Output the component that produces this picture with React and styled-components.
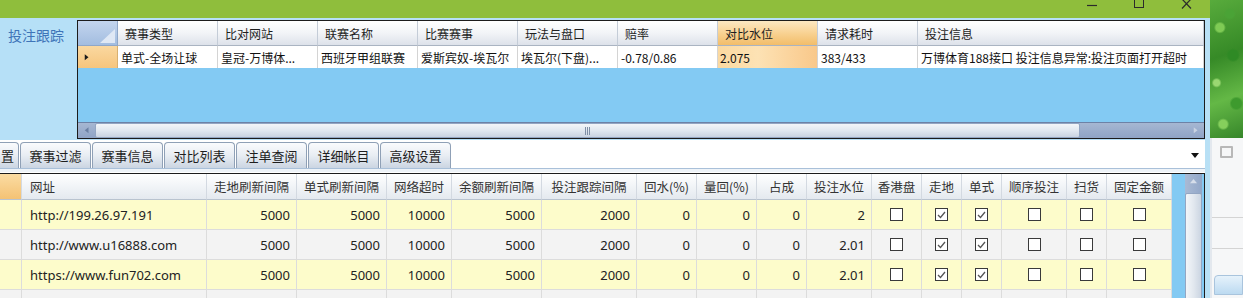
import React from "react";
import styled, { createGlobalStyle } from "styled-components";

const GlobalStyle = createGlobalStyle`
  html, body { margin: 0; padding: 0; background: #ffffff; }
  body { font-family: "Noto Sans", "Noto Sans CJK SC", sans-serif; }
  * { box-sizing: border-box; }
`;

const CJK = `"Noto Sans CJK SC", "Noto Sans", sans-serif`;
const UI = `"Noto Sans", "Noto Sans CJK SC", sans-serif`;

const Root = styled.div`
  width: 1243px;
  height: 298px;
  overflow: hidden;
  display: grid;
  grid-template-columns: 1210px 33px;
`;

const Window = styled.div`
  display: flex;
  flex-direction: column;
  min-width: 0;
  overflow: hidden;
  background: #ffffff;
`;

const TitleBar = styled.div`
  height: 18px;
  flex: none;
  background: #8fbe3c;
  display: flex;
  justify-content: flex-end;
  align-items: flex-start;
`;

const CtrlButton = styled.div`
  width: 47px;
  height: 12px;
  display: flex;
  justify-content: center;
  align-items: flex-start;
  color: #2b2b2b;
`;

const Body = styled.div`
  flex: 1;
  display: flex;
  flex-direction: column;
  border-right: 5px solid #b8e0f5;
  min-height: 0;
`;

const Upper = styled.div`
  height: 122px;
  flex: none;
  background: #b6e0f7;
  display: flex;
  padding: 2px 0 1px 0;
`;

const SideLabel = styled.div`
  width: 77px;
  flex: none;
  padding: 5px 0 0 8px;
  color: #3e74b8;
  font-family: ${CJK};
  font-size: 14px;
  line-height: 20px;
`;

const TopGrid = styled.div`
  flex: 1;
  min-width: 0;
  border: 1px solid #1c1c1c;
  background: #83caf3;
  display: flex;
  flex-direction: column;
  overflow: hidden;
`;

const TopRow = styled.div`
  display: grid;
  grid-template-columns: 40px repeat(8, 100px) 1fr;
  height: ${(p) => p.$h}px;
  flex: none;
`;

const TopHead = styled.div`
  font-family: ${CJK};
  font-size: 12px;
  color: #1e1e1e;
  display: flex;
  align-items: center;
  padding-left: 7px;
  white-space: nowrap;
  overflow: hidden;
  border-right: 1px solid #c4ccd7;
  border-bottom: 1px solid #aab4c2;
  background: ${(p) =>
    p.$accent
      ? "linear-gradient(#fce8c2 0%, #f8d08e 55%, #f2bd6a 100%)"
      : "linear-gradient(#ffffff 0%, #f2f4f7 50%, #dde2ea 100%)"};
`;

const CornerCell = styled.div`
  border-right: 1px solid #8fa7c8;
  border-bottom: 1px solid #8fa7c8;
  background: linear-gradient(#c3d5ee, #a3bde0);
  overflow: hidden;
`;

const TopCell = styled.div`
  font-family: ${CJK};
  font-size: 12px;
  color: #111;
  display: flex;
  align-items: center;
  padding-left: ${(p) => (p.$accent ? 2 : 3)}px;
  white-space: nowrap;
  overflow: hidden;
  border-right: 1px solid #d4d4d4;
  background: ${(p) =>
    p.$accent
      ? "linear-gradient(90deg, #fbd9a0 0%, #fde2b4 40%, #f9c88a 100%)"
      : "#ffffff"};
`;

const RowHeadCell = styled.div`
  display: flex;
  align-items: center;
  padding-left: 6px;
  border-right: 1px solid #d8b070;
  background: linear-gradient(#fad8a0, #f6c57d);
`;

const Fill = styled.div`
  flex: 1;
`;

const HScroll = styled.div`
  height: 16px;
  flex: none;
  display: flex;
  background: linear-gradient(#a6b7d2, #8fa4c6);
  border-top: 1px solid #6d82a6;
`;

const ScrollBtn = styled.div`
  width: ${(p) => p.$w || 17}px;
  height: ${(p) => p.$h || 16}px;
  flex: none;
  display: flex;
  align-items: center;
  justify-content: center;
`;

const HThumb = styled.div`
  width: 985px;
  flex: none;
  background: linear-gradient(#f3f6f9 0%, #e1e8f0 50%, #c9d3e1 100%);
  border: 1px solid #93a6c3;
  border-radius: 2px;
  display: flex;
  align-items: center;
  justify-content: center;
`;

const TabStrip = styled.div`
  height: 33px;
  flex: none;
  display: flex;
  flex-direction: column;
  background: #ffffff;
`;

const TabLine = styled.div`
  height: 29px;
  display: flex;
  align-items: flex-end;
  border-bottom: 1px solid #a9c0d9;
  overflow: hidden;
`;

const TabList = styled.div`
  display: flex;
  gap: 1px;
  align-items: flex-end;
`;

const Tab = styled.div`
  width: ${(p) => (p.$partial ? 19 : 71)}px;
  height: 26px;
  flex: none;
  border: 1px solid #8fa0b6;
  border-bottom: none;
  border-left-width: ${(p) => (p.$partial ? 0 : 1)}px;
  border-radius: ${(p) => (p.$partial ? "0 4px 0 0" : "4px 4px 0 0")};
  background: linear-gradient(#fafbfd 0%, #e8edf3 50%, #cbd5e2 100%);
  font-family: ${CJK};
  font-size: 13px;
  color: #1e1e1e;
  display: flex;
  align-items: center;
  justify-content: ${(p) => (p.$partial ? "flex-end" : "center")};
  padding-right: ${(p) => (p.$partial ? 4 : 0)}px;
  white-space: nowrap;
  overflow: hidden;
`;

const TabMenu = styled.div`
  margin-left: auto;
  align-self: center;
  margin-right: 6px;
  margin-top: 2px;
`;

const TabGap = styled.div`
  height: 3px;
  background: #eef3f8;
`;

const BottomGrid = styled.div`
  flex: 1;
  display: flex;
  border-top: 1px solid #1c1c1c;
  border-right: 1px solid #1c1c1c;
  background: #83caf3;
  min-height: 0;
  overflow: hidden;
`;

const Table = styled.div`
  width: 1172px;
  flex: none;
  display: flex;
  flex-direction: column;
`;

const cols =
  "22px 185px 90px 90px 65px 90px 95px 60px 60px 50px 65px 50px 40px 40px 65px 40px 65px";

const GridRow = styled.div`
  display: grid;
  grid-template-columns: ${cols};
  height: ${(p) => p.$h}px;
  flex: none;
  background: ${(p) => p.$bg || "transparent"};
`;

const Head = styled.div`
  font-family: ${CJK};
  font-size: 12.5px;
  color: #333;
  display: flex;
  align-items: center;
  justify-content: ${(p) => (p.$left ? "flex-start" : "center")};
  padding-left: ${(p) => (p.$left ? 8 : 0)}px;
  white-space: nowrap;
  border-right: 1px solid #d3d9e1;
  border-bottom: 1px solid #b9c3cf;
  background: ${(p) =>
    p.$accent
      ? "linear-gradient(#fbdca3, #f4c274)"
      : "linear-gradient(#ffffff 0%, #f1f4f7 50%, #e4e9ef 100%)"};
`;

const Cell = styled.div`
  font-family: ${UI};
  font-size: 13px;
  color: #222;
  display: flex;
  align-items: center;
  justify-content: ${(p) =>
    p.$align === "left" ? "flex-start" : p.$align === "center" ? "center" : "flex-end"};
  padding: 0 ${(p) => (p.$align === "right" ? 6 : 0)}px 0
    ${(p) => (p.$align === "left" ? 8 : 0)}px;
  border-right: 1px solid #dcdcdc;
  border-bottom: 1px solid #dcdcdc;
  white-space: nowrap;
`;

const Box = styled.span`
  width: 13px;
  height: 13px;
  border: 1px solid #3a3a3a;
  background: #ffffff;
  display: flex;
  align-items: center;
  justify-content: center;
`;

const VScroll = styled.div`
  width: 17px;
  flex: none;
  margin-left: auto;
  margin-right: 2px;
  display: flex;
  flex-direction: column;
  background: linear-gradient(90deg, #a9bad4, #92a7c8);
`;

const VThumb = styled.div`
  margin-top: 3px;
  flex: 1;
  background: linear-gradient(90deg, #f3f6f9 0%, #e2e8ef 50%, #cbd5e2 100%);
  border: 1px solid #93a6c3;
  border-radius: 2px;
  display: flex;
  align-items: center;
  justify-content: center;
  padding-top: 120px;
  min-height: 160px;
`;

const Desktop = styled.div`
  display: flex;
  flex-direction: column;
  background: #f6f7f8;
`;

const Foliage = styled.div`
  height: 138px;
  flex: none;
  background:
    radial-gradient(circle at 30% 20%, #7fcb55 0 4px, transparent 6px),
    radial-gradient(circle at 70% 40%, #2f8a25 0 5px, transparent 7px),
    radial-gradient(circle at 20% 60%, #9ad872 0 3px, transparent 5px),
    radial-gradient(circle at 80% 75%, #3e9a2e 0 5px, transparent 7px),
    radial-gradient(circle at 40% 90%, #85cf5c 0 4px, transparent 6px),
    radial-gradient(circle at 60% 10%, #4aa336 0 4px, transparent 6px),
    linear-gradient(160deg, #58ab3c, #368a27 40%, #64b846 70%, #36862a);
`;

const DeskPanel = styled.div`
  flex: 1;
  display: flex;
  flex-direction: column;
  border-left: 2px solid #e3e8ee;
  padding: 8px 0 0 8px;
`;

const DeskIcon = styled.div`
  width: 13px;
  height: 12px;
  border: 2px solid #b8b8b8;
  border-radius: 1px;
`;

const DeskLine = styled.div`
  height: 1px;
  background: #d4d4d4;
  margin-top: ${(p) => p.$mt}px;
  margin-left: -8px;
`;

const DeskButton = styled.div`
  margin-top: 26px;
  margin-left: -6px;
  height: 20px;
  border: 1px solid #a9c4dd;
  border-radius: 4px 0 0 0;
  background: linear-gradient(#e6f2fb, #bcdaf1);
`;

const topHeaders = [
  "赛事类型",
  "比对网站",
  "联赛名称",
  "比赛赛事",
  "玩法与盘口",
  "赔率",
  "对比水位",
  "请求耗时",
  "投注信息",
];

const topData = [
  "单式-全场让球",
  "皇冠-万博体...",
  "西班牙甲组联赛",
  "爱斯宾奴-埃瓦尔",
  "埃瓦尔(下盘)...",
  "-0.78/0.86",
  "2.075",
  "383/433",
  "万博体育188接口 投注信息异常:投注页面打开超时",
];

const tabs = ["赛事过滤", "赛事信息", "对比列表", "注单查阅", "详细帐目", "高级设置"];

const bottomHeaders = [
  "网址",
  "走地刷新间隔",
  "单式刷新间隔",
  "网络超时",
  "余额刷新间隔",
  "投注跟踪间隔",
  "回水(%)",
  "量回(%)",
  "占成",
  "投注水位",
  "香港盘",
  "走地",
  "单式",
  "顺序投注",
  "扫货",
  "固定金额",
];

const rows = [
  { url: "http://199.26.97.191", w: "2" },
  { url: "http://www.u16888.com", w: "2.01" },
  { url: "https://www.fun702.com", w: "2.01" },
];

const Check = ({ on }) => (
  <Box>
    {on && (
      <svg width="9" height="8" viewBox="0 0 9 8">
        <path d="M1 4 L3.5 6.5 L8 1" fill="none" stroke="#555" strokeWidth="1.3" />
      </svg>
    )}
  </Box>
);

const Arrow = ({ dir, color = "#5f7497", size = 7 }) => {
  const paths = {
    left: "M6 0 L6 8 L1 4 Z",
    right: "M1 0 L1 8 L6 4 Z",
    up: "M0 6 L8 6 L4 1 Z",
    down: "M0 1 L8 1 L4 6 Z",
  };
  return (
    <svg width={size} height={size + 1} viewBox="0 0 8 9">
      <path d={paths[dir]} fill={color} />
    </svg>
  );
};

const Grip = ({ vertical }) =>
  vertical ? (
    <svg width="8" height="6" viewBox="0 0 8 6">
      <path d="M0 0.5H8M0 2.5H8M0 4.5H8" stroke="#7f8fa6" strokeWidth="1" />
    </svg>
  ) : (
    <svg width="6" height="8" viewBox="0 0 6 8">
      <path d="M0.5 0V8M2.5 0V8M4.5 0V8" stroke="#7f8fa6" strokeWidth="1" />
    </svg>
  );

export default function App() {
  return (
    <>
      <GlobalStyle />
      <Root>
        <Window>
          <TitleBar>
            <CtrlButton>
              <svg width="11" height="10" viewBox="0 0 11 10">
                <path d="M0 5.5H10" stroke="#2b2b2b" strokeWidth="1.2" />
              </svg>
            </CtrlButton>
            <CtrlButton>
              <svg width="11" height="10" viewBox="0 0 11 10">
                <rect x="0.5" y="-2" width="9" height="9.5" fill="none" stroke="#2b2b2b" strokeWidth="1" />
              </svg>
            </CtrlButton>
            <CtrlButton>
              <svg width="12" height="10" viewBox="0 0 12 10">
                <path d="M1 -1 L10 8.5 M10 -1 L1 8.5" stroke="#2b2b2b" strokeWidth="1.2" />
              </svg>
            </CtrlButton>
          </TitleBar>
          <Body>
            <Upper>
              <SideLabel>投注跟踪</SideLabel>
              <TopGrid>
                <TopRow $h={25}>
                  <CornerCell>
                    <svg width="40" height="25" viewBox="0 0 40 25" style={{ display: "block" }}>
                      <path d="M37 8 L37 22 L22 22 Z" fill="#dfe8f5" />
                    </svg>
                  </CornerCell>
                  {topHeaders.map((h, i) => (
                    <TopHead key={h} $accent={i === 6}>
                      {h}
                    </TopHead>
                  ))}
                </TopRow>
                <TopRow $h={22}>
                  <RowHeadCell>
                    <Arrow dir="right" color="#1a1a1a" size={6} />
                  </RowHeadCell>
                  {topData.map((d, i) => (
                    <TopCell key={i} $accent={i === 6}>
                      {d}
                    </TopCell>
                  ))}
                </TopRow>
                <Fill />
                <HScroll>
                  <ScrollBtn $w={17} $h={15}>
                    <Arrow dir="left" color="#6b80a3" size={6} />
                  </ScrollBtn>
                  <HThumb>
                    <Grip />
                  </HThumb>
                  <Fill />
                  <ScrollBtn $w={17} $h={15}>
                    <Arrow dir="right" color="#c9d3e2" size={6} />
                  </ScrollBtn>
                </HScroll>
              </TopGrid>
            </Upper>
            <TabStrip>
              <TabLine>
                <TabList>
                  <Tab $partial>置</Tab>
                  {tabs.map((t) => (
                    <Tab key={t}>{t}</Tab>
                  ))}
                </TabList>
                <TabMenu>
                  <Arrow dir="down" color="#111" size={8} />
                </TabMenu>
              </TabLine>
              <TabGap />
            </TabStrip>
            <BottomGrid>
              <Table>
                <GridRow $h={26}>
                  <Head $accent />
                  {bottomHeaders.map((h, i) => (
                    <Head key={h} $left={i === 0}>
                      {h}
                    </Head>
                  ))}
                </GridRow>
                {rows.map((r, i) => (
                  <GridRow key={r.url} $h={30} $bg={i % 2 === 0 ? "#fdfccb" : "#f3f3f3"}>
                    <Cell />
                    <Cell $align="left">{r.url}</Cell>
                    <Cell $align="right">5000</Cell>
                    <Cell $align="right">5000</Cell>
                    <Cell $align="right">10000</Cell>
                    <Cell $align="right">5000</Cell>
                    <Cell $align="right">2000</Cell>
                    <Cell $align="right">0</Cell>
                    <Cell $align="right">0</Cell>
                    <Cell $align="right">0</Cell>
                    <Cell $align="right">{r.w}</Cell>
                    <Cell $align="center"><Check /></Cell>
                    <Cell $align="center"><Check on /></Cell>
                    <Cell $align="center"><Check on /></Cell>
                    <Cell $align="center"><Check /></Cell>
                    <Cell $align="center"><Check /></Cell>
                    <Cell $align="center"><Check /></Cell>
                  </GridRow>
                ))}
                <GridRow $h={30} $bg="#f3f3f3">
                  {Array.from({ length: 17 }).map((_, i) => (
                    <Cell key={i} />
                  ))}
                </GridRow>
              </Table>
              <VScroll>
                <ScrollBtn $w={17} $h={16}>
                  <Arrow dir="up" color="#d6deea" size={7} />
                </ScrollBtn>
                <VThumb>
                  <Grip vertical />
                </VThumb>
              </VScroll>
            </BottomGrid>
          </Body>
        </Window>
        <Desktop>
          <Foliage />
          <DeskPanel>
            <DeskIcon />
            <DeskLine $mt={59} />
            <DeskLine $mt={30} />
            <DeskButton />
          </DeskPanel>
        </Desktop>
      </Root>
    </>
  );
}
